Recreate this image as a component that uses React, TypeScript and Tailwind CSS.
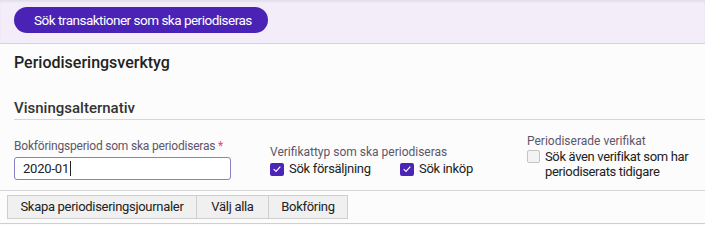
function Check({ checked }: { checked: boolean }) {
  if (!checked) {
    return <span className="inline-block h-[13px] w-[13px] shrink-0 rounded-[2px] border border-[#c4c4c4] bg-[#f3f3f3]" />;
  }
  return (
    <span className="flex h-[13px] w-[14px] shrink-0 items-center justify-center rounded-[2px] bg-[#4b25b8]">
      <svg viewBox="0 0 12 12" className="h-[10px] w-[10px]" fill="none" stroke="white" strokeWidth="1.4">
        <path d="M2 6.2 L4.8 9 L10 3.2" />
      </svg>
    </span>
  );
}

export default function App() {
  return (
    <div className="h-[225px] w-full overflow-hidden bg-[#fcfcfc] text-[#222]" style={{ fontFamily: "Roboto, sans-serif" }}>
      <div className="h-[44px] border-b border-[#d6d2dc] bg-[#f3edf9] px-[14px] pt-[7px] shadow-[inset_0_2px_2px_rgba(0,0,0,0.06)]">
        <button className="h-[26px] w-[254px] rounded-full bg-[#4a23b6] pl-[20px] text-left text-[13.5px] tracking-[-0.5px] text-white">
          Sök transaktioner som ska periodiseras
        </button>
      </div>
      <div className="pl-[14px] pt-[7px]">
        <h1 className="text-[16px] leading-[24px] font-medium text-[#222]">Periodiseringsverktyg</h1>
        <h2 className="mt-[22px] border-b border-[#d6d6d6] text-[15px] leading-[22px] font-medium text-[#333]">Visningsalternativ</h2>
        <div className="flex h-[70px] items-end pb-[10px] whitespace-nowrap">
          <div className="w-[256px] shrink-0">
            <div className="mb-[4px] text-[12px] leading-[14px] tracking-[-0.2px] text-[#5c5668]">
              Bokföringsperiod som ska periodiseras<span className="text-[#e0457b]"> *</span>
            </div>
            <div className="flex h-[23px] w-[217px] items-center rounded-[3px] border border-[#8a7fc4] bg-white pl-[8px] text-[13px] tracking-[-0.2px]">
              2020-01<span className="ml-[1px] inline-block h-[15px] w-[1px] bg-[#222]" />
            </div>
          </div>
          <div className="w-[257px] shrink-0 pb-[3px]">
            <div className="mb-[2px] text-[12px] leading-[14px] text-[#5c5668]">Verifikattyp som ska periodiseras</div>
            <div className="flex items-center text-[13px] leading-[16px] tracking-[-0.3px]">
              <div className="flex w-[130px] items-center">
                <Check checked />
                <span className="ml-[5px]">Sök försäljning</span>
              </div>
              <Check checked />
              <span className="ml-[5px]">Sök inköp</span>
            </div>
          </div>
          <div className="pb-[1px]">
            <div className="mb-[1px] text-[12px] leading-[14px] text-[#5c5668]">Periodiserade verifikat</div>
            <div className="flex items-start text-[13px] leading-[15px] tracking-[-0.35px]">
              <span className="mt-[1px]">
                <Check checked={false} />
              </span>
              <span className="ml-[5px]">
                Sök även verifikat som har
                <br />
                periodiserats tidigare
              </span>
            </div>
          </div>
        </div>
      </div>
      <div className="border-t border-[#d6d6d6] px-[7px] pt-[4px] pb-[4px]">
        <div className="flex h-[24px] w-fit border border-[#cfcfcf] bg-[#f0f0f0] text-[13px] tracking-[-0.3px] text-[#222]">
          <span className="flex w-[188px] items-center justify-center">Skapa periodiseringsjournaler</span>
          <span className="flex w-[72px] items-center justify-center border-l border-[#cfcfcf]">Välj alla</span>
          <span className="flex w-[79px] items-center justify-center border-l border-[#cfcfcf]">Bokföring</span>
        </div>
      </div>
      <div className="border-t border-[#cfcfcf]" />
    </div>
  );
}
